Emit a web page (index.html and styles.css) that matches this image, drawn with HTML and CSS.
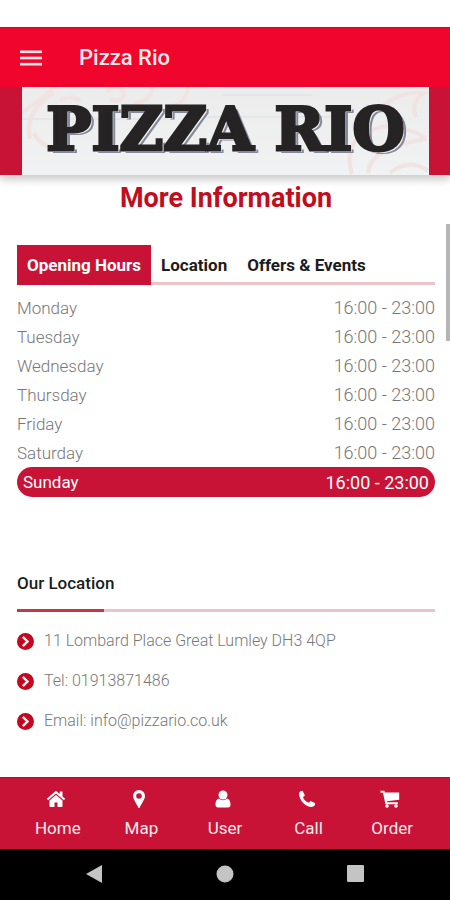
FILE: index.html
```html
<!DOCTYPE html>
<html lang="en">
<head>
  <meta charset="UTF-8" />
  <meta name="viewport" content="width=device-width, initial-scale=1.0"/>
  <title>Pizza Rio | More Information</title>
  <link rel="stylesheet" href="styles.css">
</head>

<body>
  <header class="app-bar">
    <button type="button" class="menu-btn" aria-label="Open menu">
      <svg width="22" height="16" viewBox="0 0 22 16" fill="#ffe9ea">
        <rect y="0.500" width="22" height="2.600"/>
        <rect y="6.700" width="22" height="2.600"/>
        <rect y="12.900" width="22" height="2.600"/>
      </svg>
    </button>
    <span class="app-title">Pizza Rio</span>
  </header>

  <div class="banner">
    <div class="logo">
      <svg class="logo-art" viewBox="0 0 407 88" preserveAspectRatio="none" fill="none" stroke="#f0e3e2" stroke-width="4">
        <path d="M0 26L34 0M8 52q-6-28 24-46M38 14q10-8 20 0M84 4q16-8 18 4q-4 8-14 4M112 16q18-2 18-16M150 20q14-4 16-20M12 46q8 16 24 14"/>
        <path d="M352 28q20-24 50-22q-14 8-8 24M330 87q-8-24 8-38q30-20 66 2M346 86q2-26 58-34M368 86q20-16 38-2M340 48q-6-14 12-20"/>
        <path stroke="#e4e6e8" stroke-width="2" d="M0 32h150M170 30h150M200 8h90"/>
      </svg>
      <span class="logo-text">PIZZA RIO</span>
    </div>
  </div>

  <main>
    <h1>More Information</h1>

    <section class="hours">
      <nav class="tabs">
        <a href="#hours" class="active">Opening Hours</a>
        <a href="#location">Location</a>
        <a href="#offers">Offers &amp; Events</a>
      </nav>
      <table id="hours">
        <tbody>
          <tr><th scope="row">Monday</th><td>16:00 - 23:00</td></tr>
          <tr><th scope="row">Tuesday</th><td>16:00 - 23:00</td></tr>
          <tr><th scope="row">Wednesday</th><td>16:00 - 23:00</td></tr>
          <tr><th scope="row">Thursday</th><td>16:00 - 23:00</td></tr>
          <tr><th scope="row">Friday</th><td>16:00 - 23:00</td></tr>
          <tr><th scope="row">Saturday</th><td>16:00 - 23:00</td></tr>
          <tr class="today"><th scope="row">Sunday</th><td>16:00 - 23:00</td></tr>
        </tbody>
      </table>
    </section>

    <section class="location" id="location">
      <h2>Our Location</h2>
      <ul>
        <li>
          <svg width="17" height="17" viewBox="0 0 17 17"><circle cx="8.500" cy="8.500" r="8.500" fill="#c4061f"/><path d="M5.800 3.800l4.700 4.700-4.700 4.700" fill="none" stroke="#fff" stroke-width="2.400"/></svg>
          11 Lombard Place Great Lumley DH3 4QP
        </li>
        <li>
          <svg width="17" height="17" viewBox="0 0 17 17"><circle cx="8.500" cy="8.500" r="8.500" fill="#c4061f"/><path d="M5.800 3.800l4.700 4.700-4.700 4.700" fill="none" stroke="#fff" stroke-width="2.400"/></svg>
          Tel: 01913871486
        </li>
        <li>
          <svg width="17" height="17" viewBox="0 0 17 17"><circle cx="8.500" cy="8.500" r="8.500" fill="#c4061f"/><path d="M5.800 3.800l4.700 4.700-4.700 4.700" fill="none" stroke="#fff" stroke-width="2.400"/></svg>
          Email: info@pizzario.co.uk
        </li>
      </ul>
    </section>
    <div class="scroll-thumb"></div>
  </main>

  <footer>
    <nav class="bottom-nav">
      <a href="#home">
        <svg width="20" height="18" viewBox="0 0 20 18" fill="#fff"><path d="M10 5L3.500 10.500V16q0 1 1 1h4v-4.500h3V17h4q1 0 1-1v-5.500z"/><path d="M10 .8L.8 8.800l1.300 1.400L10 3.500l7.900 6.700 1.300-1.400-2.700-2.300V1.500h-2.800v2.500z"/></svg>
        Home
      </a>
      <a href="#map">
        <svg width="20" height="18" viewBox="0 0 20 18" fill="#fff"><path fill-rule="evenodd" d="M10 0a6 6 0 0 0-6 6c0 2 1 3.500 2 5.500l3.300 6q.7 1 1.400 0l3.300-6c1-2 2-3.500 2-5.500a6 6 0 0 0-6-6zm0 3.200a2.800 2.800 0 1 1 0 5.600 2.800 2.800 0 0 1 0-5.600z"/></svg>
        Map
      </a>
      <a href="#user">
        <svg width="20" height="18" viewBox="0 0 20 18" fill="#fff"><circle cx="10" cy="5" r="4.500"/><path d="M5.800 8.500Q10 12 14.200 8.500C17 9.500 17.500 12 17.500 14.500Q17.500 17.500 15 17.500H5Q2.500 17.500 2.500 14.500C2.500 12 3 9.500 5.800 8.500z"/></svg>
        User
      </a>
      <a href="#call">
        <svg width="20" height="18" viewBox="0 0 20 18" fill="#fff"><path d="M2 3.500C2.200 1.500 4 .8 5.600.8L7.800 5.200C7.600 6.200 6 6.600 6 7.300c.8 2.200 3 4.400 5.500 5.300.9.100 1.300-1.500 2.200-1.700l4.500 2.300c.3 1.800-1.200 3.600-3.600 3.800C8.500 17 2 10 2 3.500z"/></svg>
        Call
      </a>
      <a href="#order">
        <svg width="20" height="18" viewBox="0 0 20 18" fill="#fff"><path d="M.5.800h3.900l.5 1.700H19.200V9.800L7 11.200l.2 1.100h10.600v1.900H5.400L3 2.700H.5z"/><circle cx="7" cy="16" r="1.800"/><circle cx="16" cy="16" r="1.800"/></svg>
        Order
      </a>
    </nav>
    <div class="system-nav">
      <button type="button" aria-label="Back"><svg width="18" height="18" viewBox="0 0 18 18" fill="#c4c4c4"><path d="M17 0v18L1 9z"/></svg></button>
      <button type="button" aria-label="Home screen"><svg width="18" height="18" viewBox="0 0 18 18" fill="#c4c4c4"><circle cx="9" cy="9" r="8.500"/></svg></button>
      <button type="button" aria-label="Recent apps"><svg width="18" height="18" viewBox="0 0 18 18" fill="#c4c4c4"><rect width="17" height="17" rx="1"/></svg></button>
    </div>
  </footer>
</body>
</html>
```

FILE: styles.css
```css
* {
  margin: 0;
  padding: 0;
  box-sizing: border-box;
}

body {
  min-height: 100vh;
  padding-top: 27px;
  display: flex;
  flex-direction: column;
  background: #fff;
  color: #777;
  font-family: Roboto, "Liberation Sans", sans-serif;
  font-size: 18px;
  font-weight: 300;
}

a {
  color: inherit;
  text-decoration: none;
}

button {
  border: none;
  background: none;
  cursor: pointer;
}

svg {
  display: block;
}

.app-bar {
  display: flex;
  align-items: center;
  gap: 37px;
  height: 60px;
  padding: 0 20px;
  background: #f0062d;
  border-top: 1px solid #d9000f;
  color: #ffe9ea;
}

.app-title {
  font-size: 22px;
  font-weight: 500;
}

.banner {
  padding: 0 21px 0 22px;
  background: #c91336;
  box-shadow: 0 5px 8px rgba(0, 0, 0, 0.2);
}

.logo {
  position: relative;
  height: 88px;
  background: linear-gradient(#ececec, #f1f2f3);
  text-align: center;
}

.logo-art {
  position: absolute;
  width: 100%;
  height: 100%;
  left: 0;
  top: 0;
}

.logo-text {
  position: relative;
  color: #252323;
  font-family: "DejaVu Serif", serif;
  font-size: 60px;
  font-weight: bold;
  line-height: 84px;
  white-space: nowrap;
  -webkit-text-stroke: 3px #252323;
  text-shadow: 2px 2px 0 #f1f2f3, 4px 3px 0 #85889a;
}

main {
  position: relative;
  flex: 1;
  padding: 6px 15px 0 17px;
}

h1 {
  color: #c20d1e;
  font-size: 27px;
  font-weight: 700;
  line-height: 34px;
  text-align: center;
}

.hours {
  margin-top: 30px;
}

.tabs {
  display: flex;
  border-bottom: 3px solid #ecc3c8;
  color: #1c1c1c;
  font-size: 17px;
  font-weight: 700;
}

.tabs a {
  padding: 0 10px;
  line-height: 40px;
  margin-bottom: -3px;
}

.tabs .active {
  background: #c91336;
  color: #fff;
}

table {
  width: 100%;
  margin-top: 8px;
  border-collapse: collapse;
}

th,
td {
  height: 29px;
  font-weight: 300;
}

th {
  font-size: 17px;
  text-align: left;
}

td {
  text-align: right;
}

.today th,
.today td {
  height: 30px;
  background: #c91336;
  color: #fff;
  font-weight: 400;
}

.today th {
  padding-left: 6px;
  border-radius: 15px 0 0 15px;
}

.today td {
  padding-right: 6px;
  border-radius: 0 15px 15px 0;
}

.location {
  margin-top: 71px;
}

h2 {
  position: relative;
  padding-bottom: 11px;
  border-bottom: 3px solid #e9c4cb;
  color: #1c1c1c;
  font-size: 17px;
  font-weight: 500;
  line-height: 30px;
}

/* darker start of the heading rule */
h2::after {
  content: "";
  position: absolute;
  left: 0;
  bottom: -3px;
  width: 87px;
  height: 3px;
  background: #c33a45;
}

ul {
  margin-top: 9px;
  list-style: none;
}

li {
  display: flex;
  align-items: center;
  gap: 10px;
  font-size: 16px;
  line-height: 40px;
}

.scroll-thumb {
  position: absolute;
  top: 49px;
  right: 0;
  width: 4px;
  height: 117px;
  background: #b5b5b5;
}

.bottom-nav {
  display: grid;
  grid-template-columns: repeat(5, 1fr);
  padding: 12px 16px 9px;
  background: #c91336;
  border-top: 1px solid #c40a1c;
  color: #ffe9ea;
  font-size: 17px;
  font-weight: 400;
}

.bottom-nav a {
  display: flex;
  flex-direction: column;
  align-items: center;
  gap: 8px;
  line-height: 24px;
}

.bottom-nav svg {
  margin-right: 4px;
}

.system-nav {
  display: flex;
  justify-content: space-between;
  padding: 16px 85px 17px;
  background: #000;
}
```
